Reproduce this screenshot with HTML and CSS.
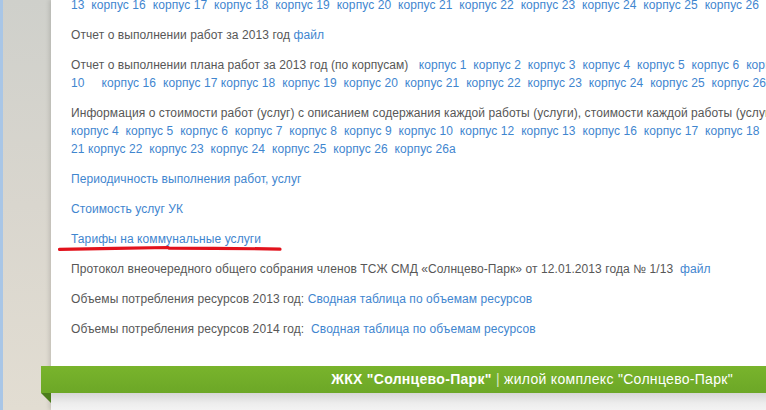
FILE: index.html
```html
<!DOCTYPE html>
<html lang="ru">
<head>
    <meta charset="UTF-8">
    <title>ЖКХ "Солнцево-Парк"</title>
    <link rel="stylesheet" href="styles.css">
</head>
<body>
    <div class="page">
        <!-- Левая полоса фона -->
        <div class="side"></div>

        <!-- Основная колонка -->
        <div class="panel">
            <div class="content">
                <p class="first">
                    <a href="#">13</a>&nbsp; <a href="#">корпус 16</a>&nbsp; <a href="#">корпус 17</a>&nbsp; <a href="#">корпус 18</a>&nbsp; <a href="#">корпус 19</a>&nbsp; <a href="#">корпус 20</a>&nbsp; <a href="#">корпус 21</a>&nbsp; <a href="#">корпус 22</a>&nbsp; <a href="#">корпус 23</a>&nbsp; <a href="#">корпус 24</a>&nbsp; <a href="#">корпус 25</a>&nbsp; <a href="#">корпус 26</a>&nbsp; <a href="#">корпус 26а</a>
                </p>

                <p>Отчет о выполнении работ за 2013 год <a href="#">файл</a></p>

                <p>
                    Отчет о выполнении плана работ за 2013 год (по корпусам)&nbsp;&nbsp; <a href="#">корпус 1</a>&nbsp; <a href="#">корпус 2</a>&nbsp; <a href="#">корпус 3</a>&nbsp; <a href="#">корпус 4</a>&nbsp; <a href="#">корпус 5</a>&nbsp; <a href="#">корпус 6</a>&nbsp; <a href="#">корпус 7</a>&nbsp; <a href="#">корпус 8</a>&nbsp; <a href="#">корпус 9</a><br>
                    <a href="#">10</a>&nbsp;&nbsp;&nbsp;&nbsp; <a href="#">корпус 16</a>&nbsp; <a href="#">корпус 17</a> <a href="#">корпус 18</a>&nbsp; <a href="#">корпус 19</a>&nbsp; <a href="#">корпус 20</a>&nbsp; <a href="#">корпус 21</a>&nbsp; <a href="#">корпус 22</a>&nbsp; <a href="#">корпус 23</a>&nbsp; <a href="#">корпус 24</a>&nbsp; <a href="#">корпус 25</a>&nbsp; <a href="#">корпус 26</a>&nbsp; <a href="#">корпус 26а</a>
                </p>

                <p>
                    Информация о стоимости работ (услуг) с описанием содержания каждой работы (услуги), стоимости каждой работы (услуги) по корпусам<br>
                    <a href="#">корпус 4</a>&nbsp; <a href="#">корпус 5</a>&nbsp; <a href="#">корпус 6</a>&nbsp; <a href="#">корпус 7</a>&nbsp; <a href="#">корпус 8</a>&nbsp; <a href="#">корпус 9</a>&nbsp; <a href="#">корпус 10</a>&nbsp; <a href="#">корпус 12</a>&nbsp; <a href="#">корпус 13</a>&nbsp; <a href="#">корпус 16</a>&nbsp; <a href="#">корпус 17</a>&nbsp; <a href="#">корпус 18</a>&nbsp; <a href="#">корпус 19</a>&nbsp; <a href="#">корпус 20</a><br>
                    <a href="#">21</a> <a href="#">корпус 22</a>&nbsp; <a href="#">корпус 23</a>&nbsp; <a href="#">корпус 24</a>&nbsp; <a href="#">корпус 25</a>&nbsp; <a href="#">корпус 26</a>&nbsp; <a href="#">корпус 26а</a>
                </p>

                <p><a href="#">Периодичность выполнения работ, услуг</a></p>

                <p><a href="#">Стоимость услуг УК</a></p>

                <p class="marked">
                    <a href="#">Тарифы на коммунальные услуги</a>
                    <!-- красная пометка под ссылкой -->
                    <svg class="mark" width="224" height="8" viewBox="0 0 224 8">
                        <path d="M1.5 5.4 C30 4.8 80 3.8 110 3.5 L111 4.1 C150 4.1 190 4.5 222 5.2" fill="none" stroke="#e2121c" stroke-width="3.2" stroke-linecap="round"/>
                    </svg>
                </p>

                <p>Протокол внеочередного общего собрания членов ТСЖ СМД «Солнцево-Парк» от 12.01.2013 года № 1/13&nbsp; <a href="#">файл</a></p>

                <p>Объемы потребления ресурсов 2013 год: <a href="#">Сводная таблица по объемам ресурсов</a></p>

                <p>Объемы потребления ресурсов 2014 год:&nbsp; <a href="#">Сводная таблица по объемам ресурсов</a></p>
            </div>

            <!-- Нижняя зелёная лента -->
            <div class="ribbon">
                <b>ЖКХ "Солнцево-Парк"</b> <span class="sep">|</span> жилой комплекс "Солнцево-Парк"
            </div>
            <div class="shadow"></div>
        </div>
    </div>
</body>
</html>
```

FILE: styles.css
```css
/* Сброс */
* { margin: 0; padding: 0; box-sizing: border-box; }

body {
    width: 766px;
    height: 410px;
    overflow: hidden;
    font-family: "Liberation Sans", Arial, sans-serif;
    font-size: 12px;
    color: #575757;
    background: #e0dcd2;
}

.page {
    display: flex;
    height: 410px;
    border-left: 3px solid #a9c6e6;
}

/* Левая полоса */
.side {
    width: 48px;
    flex-shrink: 0;
    background: linear-gradient(to bottom, #cfd0cb 0%, #d9d6ce 50%, #e2ddd2 100%);
}

/* Белая колонка */
.panel {
    flex: 1;
    display: flex;
    flex-direction: column;
    background: #ffffff;
    box-shadow: -2px 0 4px rgba(0, 0, 0, 0.12);
    min-width: 0;
}

.content {
    padding-left: 20px;
    height: 366px;
}

.content p {
    line-height: 18px;
    margin-bottom: 12px;
    white-space: nowrap;
    letter-spacing: 0.08px;
}

.content p.first {
    margin-top: -4px;
}

a {
    color: #3f86cf;
    text-decoration: none;
}

.marked {
    position: relative;
}

.mark {
    position: absolute;
    left: -13px;
    top: 14px;
}

/* Зелёная лента */
.ribbon {
    position: relative;
    margin-left: -10px;
    height: 27px;
    line-height: 27px;
    padding-right: 33px;
    text-align: right;
    font-size: 14px;
    letter-spacing: 0.3px;
    color: #ffffff;
    background: linear-gradient(to bottom, #79b42c, #6ca727);
}

.ribbon::before {
    content: "";
    position: absolute;
    left: 0;
    top: 27px;
    border-top: 10px solid #4c7d1c;
    border-left: 10px solid transparent;
}

.ribbon .sep {
    color: #d8e8c4;
}

.shadow {
    flex: 1;
    background: linear-gradient(to bottom, #d6d6d6, #ededed 60%, #f3f3f3);
}
```
